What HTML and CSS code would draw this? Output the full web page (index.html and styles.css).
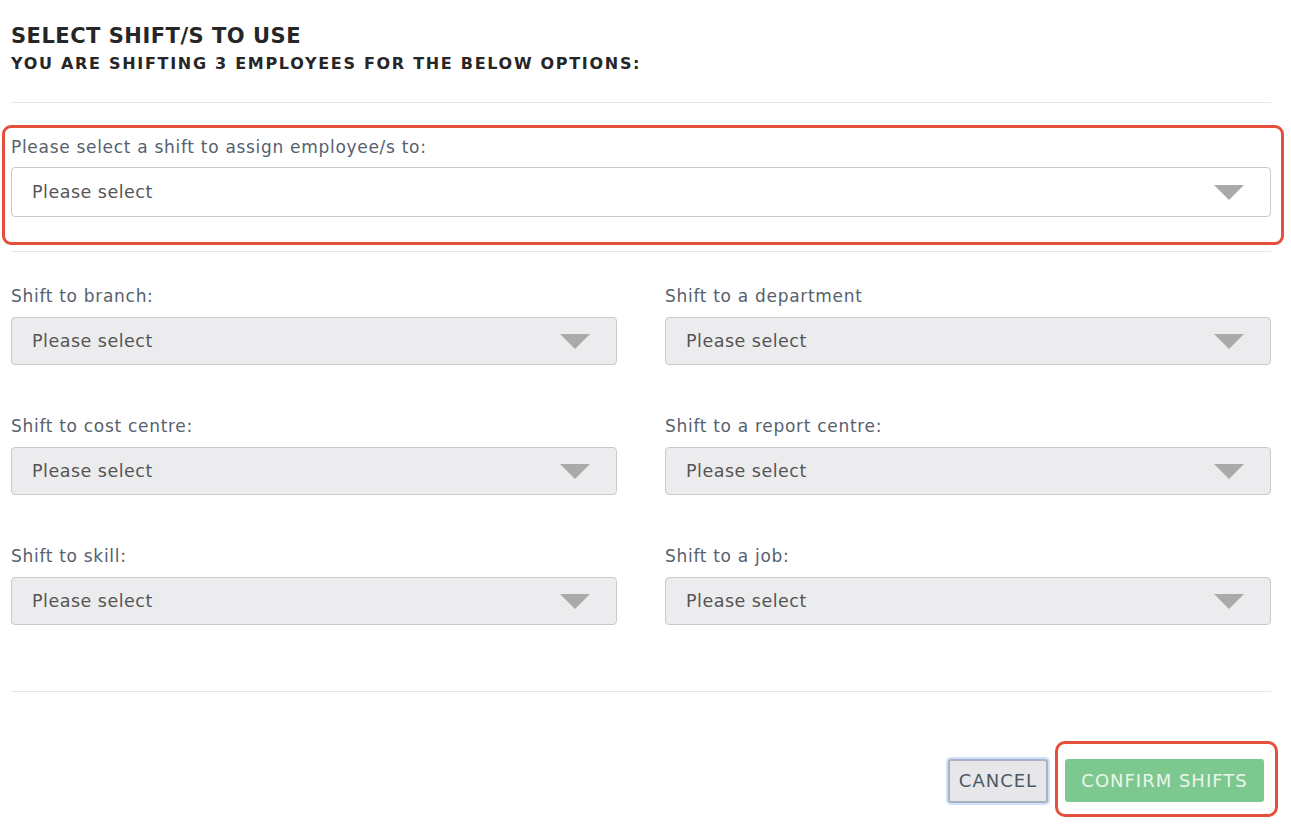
FILE: index.html
```html
<!DOCTYPE html>
<html>
<head>
<meta charset="utf-8">
<link rel="stylesheet" href="styles.css">
</head>
<body>
<div class="modal">
  <header class="head">
    <h1 class="title">SELECT SHIFT/S TO USE</h1>
    <h2 class="subtitle">YOU ARE SHIFTING 3 EMPLOYEES FOR THE BELOW OPTIONS:</h2>
  </header>
  <div class="rule"></div>
  <div class="highlight">
    <div class="label">Please select a shift to assign employee/s to:</div>
    <div class="select select-white"><span>Please select</span><span class="caret"></span></div>
  </div>
  <div class="rule rule-mid"></div>
  <div class="grid">
    <div class="field"><div class="label">Shift to branch:</div><div class="select"><span>Please select</span><span class="caret"></span></div></div>
    <div class="field"><div class="label">Shift to a department</div><div class="select"><span>Please select</span><span class="caret"></span></div></div>
    <div class="field"><div class="label">Shift to cost centre:</div><div class="select"><span>Please select</span><span class="caret"></span></div></div>
    <div class="field"><div class="label">Shift to a report centre:</div><div class="select"><span>Please select</span><span class="caret"></span></div></div>
    <div class="field"><div class="label">Shift to skill:</div><div class="select"><span>Please select</span><span class="caret"></span></div></div>
    <div class="field"><div class="label">Shift to a job:</div><div class="select"><span>Please select</span><span class="caret"></span></div></div>
  </div>
  <div class="rule rule-foot"></div>
  <div class="footer">
    <button class="btn btn-cancel">CANCEL</button>
    <div class="btn-highlight"><button class="btn btn-confirm">CONFIRM SHIFTS</button></div>
  </div>
</div>
</body>
</html>
```
FILE: styles.css
```css
html, body { margin: 0; padding: 0; background: #fff; }
body { font-family: "DejaVu Sans", "Liberation Sans", sans-serif; }
.modal { width: 1260px; padding: 21px 0 0 11px; }
.head { padding-bottom: 28px; }
.title { margin: 0; font-size: 21px; line-height: 30px; font-weight: 700; color: #262626; letter-spacing: 0.5px; }
.subtitle { margin: 3px 0 0; font-size: 16px; line-height: 20px; font-weight: 700; color: #262626; letter-spacing: 1.7px; }
.rule { height: 1px; background: #e6e6e6; }
.highlight { margin: 22px -13px 0 -9px; border: 3px solid #e4503c; border-radius: 9px; padding: 8px 10px 25px 6px; }
.label { font-size: 17px; line-height: 22px; color: #56616e; font-weight: 400; letter-spacing: 0.7px; }
.highlight .label { margin-bottom: 9px; }
.select { height: 48px; box-sizing: border-box; border: 1px solid #c9c9c9; border-radius: 4px; background: #ececee; display: flex; align-items: center; justify-content: space-between; padding: 0 26px 0 20px; font-size: 17.5px; color: #555; font-weight: 400; letter-spacing: 0.5px; }
.select-white { background: #fff; height: 50px; }
.caret { width: 0; height: 0; border-left: 15px solid transparent; border-right: 15px solid transparent; border-top: 15px solid #aaa; margin-top: 1px; }
.rule-mid { margin-top: 6px; }
.grid { display: grid; grid-template-columns: 606px 606px; column-gap: 48px; row-gap: 50px; padding-top: 33px; }
.field .label { margin-bottom: 10px; }
.rule-foot { margin-top: 66px; }
.footer { display: flex; justify-content: flex-end; align-items: center; margin-top: 49px; margin-right: -7px; gap: 7px; }
.btn { font-family: inherit; font-size: 18px; letter-spacing: 1px; cursor: pointer; font-weight: 400; }
.btn-cancel { height: 44px; width: 100px; box-sizing: border-box; background: #e7e7e9; color: #4d5866; border: 2px solid #a9b3c3; border-radius: 3px; box-shadow: 0 0 0 2px #cfe0f8; padding: 0; margin-top: 3px; }
.btn-highlight { border: 3px solid #e4503c; border-radius: 10px; padding: 15px 11px 12px 7px; }
.btn-confirm { height: 43px; width: 199px; background: #7dc88e; color: #eaf6ec; border: none; border-radius: 3px; padding: 0; }
```
